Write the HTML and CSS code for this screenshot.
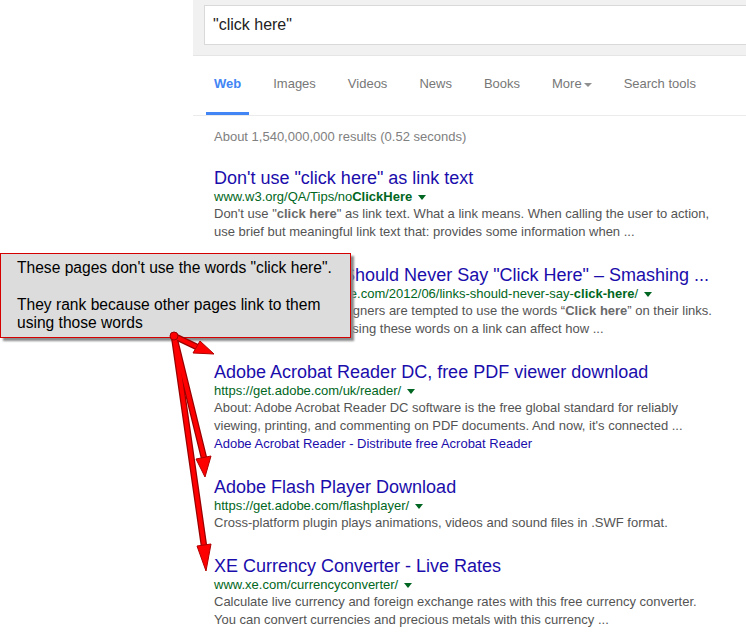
FILE: index.html
```html
<!DOCTYPE html>
<html lang="en">

<head>
    <meta charset="UTF-8">
    <title>"click here" - Search</title>
    <link rel="stylesheet" href="styles.css">
</head>

<body>
    <!-- Search bar -->
    <div class="topbar">
        <div class="search-box">"click here"</div>
    </div>

    <!-- Tabs -->
    <ul class="tabs">
        <li class="tab active">Web</li>
        <li class="tab">Images</li>
        <li class="tab">Videos</li>
        <li class="tab">News</li>
        <li class="tab">Books</li>
        <li class="tab">More<span class="more-caret"></span></li>
        <li class="tab">Search tools</li>
    </ul>

    <div class="results">
        <div class="result-count">About 1,540,000,000 results (0.52 seconds)</div>

        <div class="result">
            <a class="result-title">Don't use "click here" as link text</a>
            <div class="result-url">www.w3.org/QA/Tips/no<b>ClickHere</b><span class="caret"></span></div>
            <div class="snippet">Don't use "<b>click here</b>" as link text. What a link means. When calling the user to action,<br>use brief but meaningful link text that: provides some information when ...</div>
        </div>

        <div class="result">
            <a class="result-title">Why Your Links Should Never Say "Click Here" – Smashing ...</a>
            <div class="result-url">www.smashingmagazine.com/2012/06/links-should-never-say-<b>click-here</b>/<span class="caret"></span></div>
            <div class="snippet">Jun 4, 2012 - Many designers are tempted to use the words “<b>Click here</b>” on their links.<br>They don't realize that using these words on a link can affect how ...</div>
        </div>

        <div class="result">
            <a class="result-title">Adobe Acrobat Reader DC, free PDF viewer download</a>
            <div class="result-url">https://get.adobe.com/uk/reader/<span class="caret"></span></div>
            <div class="snippet">About: Adobe Acrobat Reader DC software is the free global standard for reliably<br>viewing, printing, and commenting on PDF documents. And now, it's connected ...</div>
            <a class="sitelink">Adobe Acrobat Reader - Distribute free Acrobat Reader</a>
        </div>

        <div class="result">
            <a class="result-title">Adobe Flash Player Download</a>
            <div class="result-url">https://get.adobe.com/flashplayer/<span class="caret"></span></div>
            <div class="snippet">Cross-platform plugin plays animations, videos and sound files in .SWF format.</div>
        </div>

        <div class="result">
            <a class="result-title">XE Currency Converter - Live Rates</a>
            <div class="result-url">www.xe.com/currencyconverter/<span class="caret"></span></div>
            <div class="snippet">Calculate live currency and foreign exchange rates with this free currency converter.<br>You can convert currencies and precious metals with this currency ...</div>
        </div>
    </div>

    <!-- Annotation callout -->
    <div class="callout">
        <p>These pages don't use the words "click here".</p>
        <p>They rank because other pages link to them<br>using those words</p>
    </div>

    <svg class="arrows" width="746" height="639" viewBox="0 0 746 639">
        <g stroke="#9a0000" stroke-width="6.5" stroke-linecap="round">
            <line x1="174" y1="336" x2="197" y2="347" />
            <line x1="174" y1="336" x2="204" y2="458" />
            <line x1="174" y1="336" x2="204" y2="546" />
        </g>
        <g stroke="#ff0000" stroke-width="4" stroke-linecap="round">
            <line x1="174" y1="336" x2="197" y2="347" />
            <line x1="174" y1="336" x2="204" y2="458" />
            <line x1="174" y1="336" x2="204" y2="546" />
        </g>
        <g fill="#ff0000" stroke="#b00000" stroke-width="1" stroke-linejoin="round">
            <polygon points="200,341 193,353 214,354" />
            <polygon points="196,459 211,456 205,477" />
            <polygon points="197,546 211,544 206,571" />
        </g>
        <circle cx="174" cy="336" r="4" fill="#ff0000" stroke="#9a0000" stroke-width="1" />
    </svg>
</body>

</html>
```

FILE: styles.css
```css
/* General page */
body {
    font-family: "Liberation Sans", Arial, sans-serif;
    background-color: #fff;
    margin: 0;
    overflow: hidden;
    position: relative;
}

/* Search bar */
.topbar {
    margin-left: 193px;
    height: 50px;
    padding: 5px 0 0 11px;
    background-color: #f1f1f1;
    border-bottom: 1px solid #e5e5e5;
    overflow: hidden;
}

.search-box {
    width: 600px;
    height: 38px;
    line-height: 38px;
    padding-left: 8px;
    background-color: #fff;
    border: 1px solid #d9d9d9;
    font-size: 16px;
    color: #222;
}

/* Tabs */
.tabs {
    list-style: none;
    display: flex;
    gap: 16px;
    margin: 0 0 0 193px;
    padding: 0 0 0 13px;
    border-bottom: 1px solid #ebebeb;
}

.tab {
    padding: 0 8px;
    line-height: 56px;
    font-size: 13px;
    color: #777;
    border-bottom: 3px solid transparent;
}

.tab.active {
    color: #4285f4;
    font-weight: bold;
    border-bottom-color: #4285f4;
}

.more-caret {
    display: inline-block;
    vertical-align: middle;
    margin-left: 2px;
    border-top: 4px solid #909090;
    border-left: 4px solid transparent;
    border-right: 4px solid transparent;
}

/* Results */
.results {
    margin-left: 214px;
}

.result-count {
    margin-top: 12px;
    font-size: 13px;
    line-height: 18px;
    color: #808080;
}

.result {
    margin-top: 21px;
    white-space: nowrap;
}

.result + .result {
    margin-top: 23px;
}

.result-title {
    display: block;
    font-size: 18px;
    line-height: 22px;
    color: #1a0dab;
}

.result-url {
    font-size: 13px;
    line-height: 16px;
    color: #006621;
}

.caret {
    display: inline-block;
    vertical-align: middle;
    margin-left: 6px;
    border-top: 5px solid #006621;
    border-left: 4px solid transparent;
    border-right: 4px solid transparent;
}

.snippet {
    font-size: 13px;
    line-height: 18px;
    color: #545454;
}

.snippet b {
    color: #6a6a6a;
}

.sitelink {
    display: block;
    font-size: 13px;
    line-height: 18px;
    color: #1a0dab;
}

/* Annotation callout */
.callout {
    position: absolute;
    left: 0;
    top: 253px;
    width: 333px;
    padding: 5px 0 5px 16px;
    background-color: #dcdcdc;
    border: 1px solid #d40000;
    box-shadow: 3px 3px 2px #8a8a8a;
    font-size: 15.6px;
    line-height: 18px;
    color: #000;
}

.callout p {
    margin: 0;
}

.callout p + p {
    margin-top: 19px;
}

.arrows {
    position: absolute;
    left: 0;
    top: 0;
    pointer-events: none;
}
```
